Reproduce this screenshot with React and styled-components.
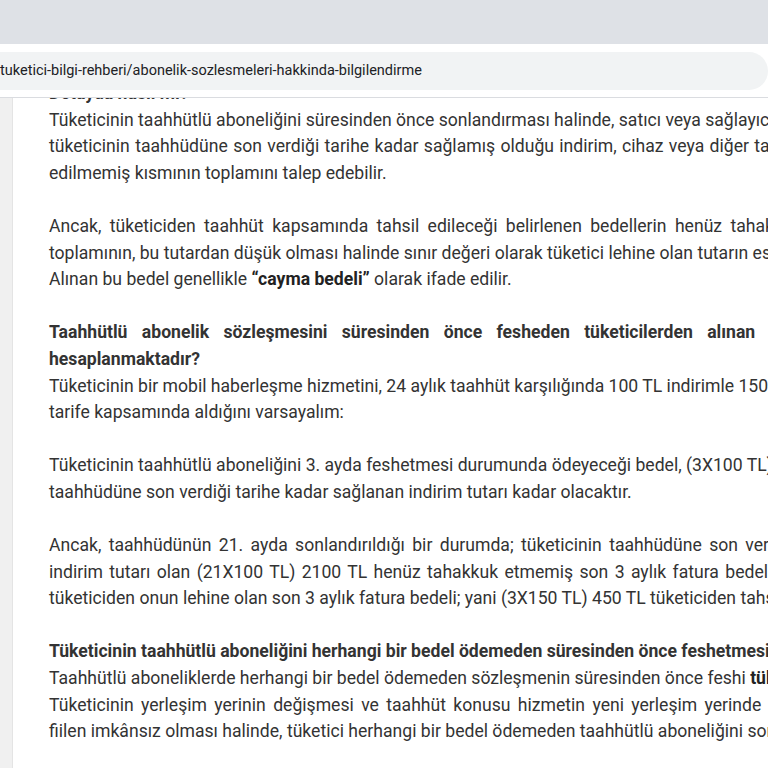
import React from "react";
import styled, { createGlobalStyle } from "styled-components";

const G = createGlobalStyle`
  body { margin:0; background:#f3f3f3; font-family: Roboto, "Liberation Sans", sans-serif; overflow:hidden; }
`;
const Tabs = styled.div`height:44px;background:#dee1e6;`;
const Toolbar = styled.div`height:53px;background:#fff;display:flex;align-items:center;border-bottom:1px solid #dadce0;position:relative;z-index:2;`;
const Omni = styled.div`height:38px;flex:1;margin-left:-20px;background:#f1f3f4;border-radius:19px;display:flex;align-items:center;padding-left:20px;font-size:14.5px;color:#202124;`;
const Page = styled.div`display:flex;height:680px;position:relative;z-index:1;`;
const Side = styled.div`width:12px;background:#f0f0f0;border-right:1px solid #e4e4e4;`;
const Content = styled.div`flex:1;background:#fff;padding:0 0 0 36px;margin-top:-18px;overflow:hidden;`;
const Line = styled.div`
  white-space:nowrap;font-size:17.6px;line-height:26.6px;color:#333;
  font-weight:${p=>p.b?700:400};
  margin-top:${p=>p.gap?26.6:0}px;
  word-spacing:${p=>p.ws||0}px;
`;
const B = styled.b`font-weight:700;color:#222;`;

export default function App(){
  return (<>
    <G/>
    <Tabs/>
    <Toolbar><Omni>tuketici-bilgi-rehberi/abonelik-sozlesmeleri-hakkinda-bilgilendirme</Omni></Toolbar>
    <Page>
      <Side/>
      <Content>
        <Line b>Detayda nasıl mı?</Line>
        <Line>Tüketicinin taahhütlü aboneliğini süresinden önce sonlandırması halinde, satıcı veya sağlayıcı</Line>
        <Line ws={1}>tüketicinin taahhüdüne son verdiği tarihe kadar sağlamış olduğu indirim, cihaz veya diğer taahhüt</Line>
        <Line>edilmemiş kısmının toplamını talep edebilir.</Line>
        <Line gap ws={4}>Ancak, tüketiciden taahhüt kapsamında tahsil edileceği belirlenen bedellerin henüz tahakkuk</Line>
        <Line>toplamının, bu tutardan düşük olması halinde sınır değeri olarak tüketici lehine olan tutarın esas</Line>
        <Line>Alınan bu bedel genellikle <B>“cayma bedeli”</B> olarak ifade edilir.</Line>
        <Line gap b ws={10}>Taahhütlü abonelik sözleşmesini süresinden önce fesheden tüketicilerden alınan</Line>
        <Line b>hesaplanmaktadır?</Line>
        <Line>Tüketicinin bir mobil haberleşme hizmetini, 24 aylık taahhüt karşılığında 100 TL indirimle 150 TL</Line>
        <Line>tarife kapsamında aldığını varsayalım:</Line>
        <Line gap>Tüketicinin taahhütlü aboneliğini 3. ayda feshetmesi durumunda ödeyeceği bedel, (3X100 TL)</Line>
        <Line>taahhüdüne son verdiği tarihe kadar sağlanan indirim tutarı kadar olacaktır.</Line>
        <Line gap ws={3}>Ancak, taahhüdünün 21. ayda sonlandırıldığı bir durumda; tüketicinin taahhüdüne son verdiği</Line>
        <Line ws={2}>indirim tutarı olan (21X100 TL) 2100 TL henüz tahakkuk etmemiş son 3 aylık fatura bedeli</Line>
        <Line>tüketiciden onun lehine olan son 3 aylık fatura bedeli; yani (3X150 TL) 450 TL tüketiciden tahsil</Line>
        <Line gap b>Tüketicinin taahhütlü aboneliğini herhangi bir bedel ödemeden süresinden önce feshetmesi</Line>
        <Line>Taahhütlü aboneliklerde herhangi bir bedel ödemeden sözleşmenin süresinden önce feshi <B>tüketici</B></Line>
        <Line ws={3}>Tüketicinin yerleşim yerinin değişmesi ve taahhüt konusu hizmetin yeni yerleşim yerinde</Line>
        <Line>fiilen imkânsız olması halinde, tüketici herhangi bir bedel ödemeden taahhütlü aboneliğini sona</Line>
      </Content>
    </Page>
  </>);
}
